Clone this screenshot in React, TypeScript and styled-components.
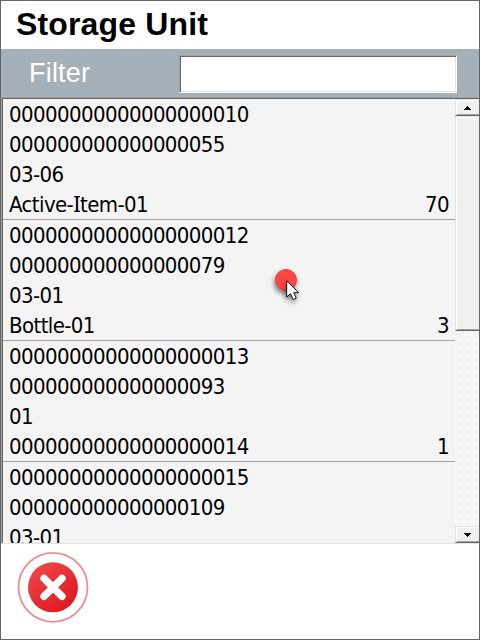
import React from "react";
import styled, { createGlobalStyle, css } from "styled-components";

const GlobalStyle = createGlobalStyle`
  * { box-sizing: border-box; }
  html, body { margin: 0; background: #fff; }
`;

const Screen = styled.div`
  position: relative;
  width: 480px;
  height: 640px;
  display: flex;
  flex-direction: column;
  overflow: hidden;
  background: #fff;
  border: 1px solid #656565;
  color: #000;
`;

const TitleBar = styled.header`
  flex: 0 0 48px;
  padding-left: 15px;
  font: bold 32px/46px "Liberation Sans", Arial, sans-serif;
  letter-spacing: 0.15px;
`;

const FilterBar = styled.div`
  flex: 0 0 49px;
  display: flex;
  align-items: flex-start;
  background: #a6b0b8;
  border-bottom: 1px solid #a0a0a0;
`;

const FilterLabel = styled.label`
  width: 150px;
  margin-left: 28px;
  color: #fff;
  font: 27px/48px "Liberation Sans", Arial, sans-serif;
  letter-spacing: 0.2px;
`;

const FilterInput = styled.input`
  width: 278px;
  height: 38px;
  margin-top: 6px;
  padding: 0 4px;
  background: #fff;
  border: 1px solid;
  border-color: #a0a0a0 #fff #fff #a0a0a0;
  border-radius: 0;
  box-shadow: inset 1px 1px #696969, inset -1px -1px #e3e3e3;
  outline: none;
  font: 22px "Liberation Sans", Arial, sans-serif;
`;

const ListFrame = styled.div`
  flex: 0 0 446px;
  display: flex;
  border: solid;
  border-width: 0 0 1px 1px;
  border-color: #e3e3e3 #e3e3e3 #e3e3e3 #a0a0a0;
`;

const ListInner = styled.div`
  flex: 1;
  display: flex;
  border: solid #696969;
  border-width: 1px 0 0 1px;
`;

const List = styled.ul`
  flex: 1;
  height: 444px;
  margin: 0;
  padding: 0;
  overflow: hidden;
  list-style: none;
  background: #f4f4f4;
`;

const Item = styled.li`
  height: 121px;
  padding: 1px 6px 0;
  border-bottom: 1px solid #a0a0a0;
  font: 22px/30px "DejaVu Sans Condensed", "DejaVu Sans", sans-serif;
  font-stretch: condensed;
  letter-spacing: -0.6px;
`;

const Line = styled.div`
  display: flex;
  justify-content: space-between;
  height: 30px;
  white-space: pre;
`;

const SerifCap = styled.span`
  font-family: "Noto Sans", sans-serif;
  line-height: 0;
`;

const ScrollBar = styled.div`
  flex: 0 0 24px;
  display: flex;
  flex-direction: column;
  background: repeating-conic-gradient(#fff 0 25%, #f0f0f0 0 50%) 0 0 / 2px 2px;
`;

const raised = css`
  background: #f0f0f0;
  border: solid;
  border-width: 1px 0 1px 1px;
  border-color: #e3e3e3 #696969 #696969 #e3e3e3;
  box-shadow: inset 1px 1px #fff, inset 0 -1px #a0a0a0;
`;

const ArrowButton = styled.button`
  ${raised}
  flex: 0 0 17px;
  display: flex;
  align-items: center;
  justify-content: center;
  padding: 0;
  border-radius: 0;
`;

const Thumb = styled.div`
  ${raised}
  flex: 0 0 215px;
`;

const Track = styled.div`
  flex: 1;
`;

const Footer = styled.footer`
  flex: 1;
  padding: 7px 0 0 15px;
`;

const CloseButton = styled.button`
  display: block;
  width: 74px;
  height: 74px;
  padding: 0;
  border: 0;
  background: none;
`;

const Pointer = styled.svg`
  position: absolute;
  left: 264px;
  top: 258px;
`;

type Unit = { lines: string[]; qty: string };

const units: Unit[] = [
  { lines: ["00000000000000000010", "000000000000000055", "03-06", "Active-Item-01"], qty: "70" },
  { lines: ["00000000000000000012", "000000000000000079", "03-01", "Bottle-01"], qty: "3" },
  { lines: ["00000000000000000013", "000000000000000093", "01", "00000000000000000014"], qty: "1" },
  { lines: ["00000000000000000015", "000000000000000109", "03-01"], qty: "" },
];

const Label = ({ text }: { text: string }) => (
  <span>
    {text.split(/(I)/).map((part, i) => (part === "I" ? <SerifCap key={i}>I</SerifCap> : part))}
  </span>
);

const Arrow = ({ down }: { down?: boolean }) => (
  <svg width="7" height="4" shapeRendering="crispEdges">
    <path d={down ? "M0 0h7v1H6v1H5v1H4v1H3V3H2V2H1V1H0z" : "M3 0h1v1h1v1h1v1h1v1H0V3h1V2h1V1h1z"} />
  </svg>
);

export default function App() {
  return (
    <>
      <GlobalStyle />
      <Screen>
        <TitleBar>Storage Unit</TitleBar>
        <FilterBar>
          <FilterLabel htmlFor="filter">Filter</FilterLabel>
          <FilterInput id="filter" />
        </FilterBar>
        <ListFrame>
          <ListInner>
            <List>
              {units.map((unit) => (
                <Item key={unit.lines[0]}>
                  {unit.lines.map((line, i) => (
                    <Line key={i}>
                      <Label text={line} />
                      {i === 3 && <span>{unit.qty}</span>}
                    </Line>
                  ))}
                </Item>
              ))}
            </List>
            <ScrollBar>
              <ArrowButton aria-label="Scroll up"><Arrow /></ArrowButton>
              <Thumb />
              <Track />
              <ArrowButton aria-label="Scroll down"><Arrow down /></ArrowButton>
            </ScrollBar>
          </ListInner>
        </ListFrame>
        <Footer>
          <CloseButton aria-label="Close">
            <svg width="74" height="74" viewBox="0 0 74 74">
              <defs>
                <linearGradient id="red" x1="0" y1="0" x2="0.8" y2="1">
                  <stop offset="0" stopColor="#f04b50" />
                  <stop offset="1" stopColor="#de161d" />
                </linearGradient>
              </defs>
              <circle cx="37" cy="36.3" r="34.5" fill="none" stroke="#ee8d90" strokeWidth="1.8" />
              <circle cx="37" cy="36.3" r="25" fill="url(#red)" />
              <path d="M28 27.3l18 18M46 27.3l-18 18" stroke="#fff" strokeWidth="7.4" strokeLinecap="round" />
            </svg>
          </CloseButton>
        </Footer>
        <Pointer width="50" height="50" viewBox="0 0 50 50">
          <defs>
            <filter id="shadow" x="-50%" y="-50%" width="200%" height="200%">
              <feDropShadow dx="-1" dy="3" stdDeviation="2.4" floodColor="#000" floodOpacity="0.5" />
            </filter>
          </defs>
          <circle cx="21" cy="21" r="10.5" fill="#ff4444" stroke="#df3d3d" filter="url(#shadow)" />
          <path d="M21.7 21.8v16.2l3.8-3.4 2.8 6 3-1.5-2.6-5.4h4.9z" fill="#fff" stroke="#111" filter="url(#shadow)" />
        </Pointer>
      </Screen>
    </>
  );
}
